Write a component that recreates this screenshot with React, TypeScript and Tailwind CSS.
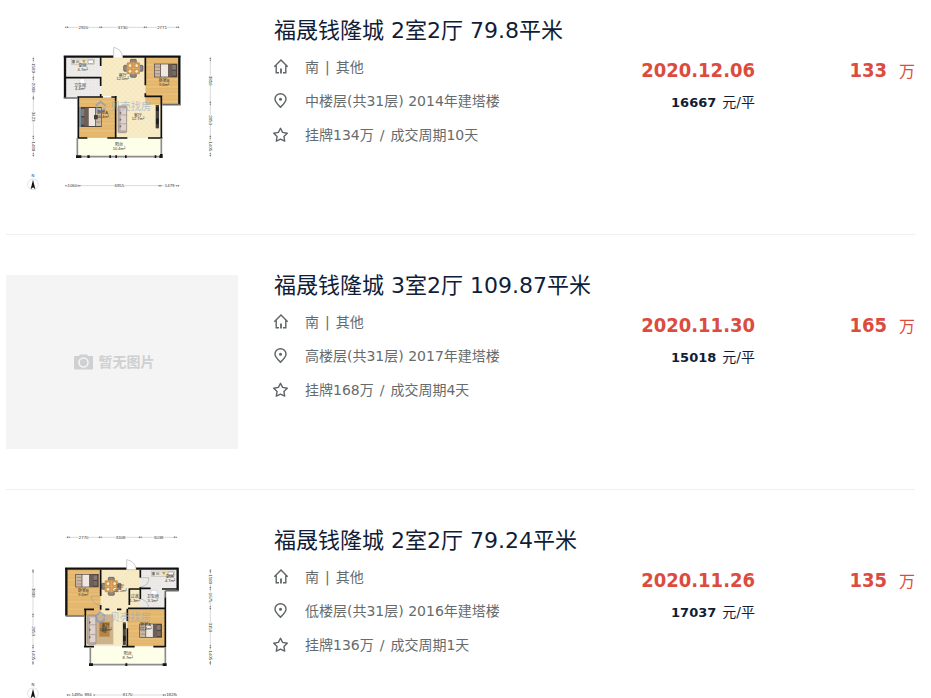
import { Fragment, type ReactNode } from 'react';

const SANS = "font-['DejaVu_Sans','Noto_Sans_CJK_SC',sans-serif]";
const PLAN_FONT = "font-['Liberation_Sans','Noto_Sans_CJK_SC',sans-serif]";
const BOLD = "font-['DejaVu_Sans_Condensed','DejaVu_Sans','Noto_Sans_CJK_SC',sans-serif] font-bold";

type PlanKind = 'east' | 'west' | 'none';

interface Deal {
  plan: PlanKind;
  title: string;
  facing: string;
  floor: string;
  cycle: string;
  date: string;
  unit: string;
  total: string;
}

const deals: Deal[] = [
  {
    plan: 'east',
    title: '福晟钱隆城 2室2厅 79.8平米',
    facing: '南 | 其他',
    floor: '中楼层(共31层) 2014年建塔楼',
    cycle: '挂牌134万 / 成交周期10天',
    date: '2020.12.06',
    unit: '16667',
    total: '133',
  },
  {
    plan: 'none',
    title: '福晟钱隆城 3室2厅 109.87平米',
    facing: '南 | 其他',
    floor: '高楼层(共31层) 2017年建塔楼',
    cycle: '挂牌168万 / 成交周期4天',
    date: '2020.11.30',
    unit: '15018',
    total: '165',
  },
  {
    plan: 'west',
    title: '福晟钱隆城 2室2厅 79.24平米',
    facing: '南 | 其他',
    floor: '低楼层(共31层) 2016年建塔楼',
    cycle: '挂牌136万 / 成交周期1天',
    date: '2020.11.26',
    unit: '17037',
    total: '135',
  },
];

function Icon({ children }: { children: ReactNode }) {
  return (
    <svg viewBox="0 0 14 16" className="h-4 w-3.5 shrink-0 overflow-visible" fill="none" stroke="#5f6566" strokeWidth="1.4" aria-hidden="true">
      {children}
    </svg>
  );
}

const HouseIcon = () => (
  <Icon>
    <path d="M0.3 7.700 7 1l6.700 6.700M2.200 6.500v7.200H5M11.800 6.500v7.200H9" />
    <path d="M7 9.500v5" strokeWidth="1.800" />
  </Icon>
);

const PinIcon = () => (
  <Icon>
    <path d="M6.500 14.200C3.400 11.200 1 8.900 1 6.200a5.500 5.500 0 0 1 11 0c0 2.700-2.400 5-5.500 8z" />
    <circle cx="6.500" cy="6.200" r="1.500" fill="#5f6566" stroke="none" />
  </Icon>
);

const StarIcon = () => (
  <Icon>
    <path d="M6.500 1.300 8.600 5.400l4.700.8-3.400 3.200.8 4.700-4.200-2-4.200 2 .8-4.700L-.3 6.200l4.700-.8z" strokeLinejoin="round" />
  </Icon>
);

/* ---- floor plan parts ---- */

function Dimension({ from, to, at, marks, labels, vertical }: {
  from: number;
  to: number;
  at: number;
  marks: number[];
  labels: [number, string][];
  vertical?: boolean;
}) {
  return (
    <g transform={vertical ? `translate(${at} 0) rotate(90)` : `translate(0 ${at})`}>
      <path d={`M${from} 0H${to}`} stroke="#b5b5b5" strokeWidth="1.500" />
      {[from, ...marks, to].map((m) => (
        <path key={m} d={`M${m - 6} 0l5-3v6zM${m + 6} 0l-5-3v6z`} fill="#777" />
      ))}
      {labels.map(([x, t]) => (
        <g key={x}>
          <rect x={x - 15} y={-6} width={30} height={12} fill="#fff" />
          <text x={x} y={4} fontSize="13" textAnchor="middle" fill="#333">
            {t}
          </text>
        </g>
      ))}
    </g>
  );
}

function Bed({ x, y, w, h, flip }: { x: number; y: number; w: number; h: number; flip?: boolean }) {
  return (
    <g transform={flip ? `translate(${x + w} ${y}) scale(-1 1)` : `translate(${x} ${y})`}>
      <rect width={w} height={h} fill="#51453e" />
      <rect x={w * 0.03} y={h * 0.05} width={w * 0.24} height={h * 0.9} fill="#cbb9a5" />
      <path d={`M4 ${h * 0.25}H${w * 0.28}M4 ${h * 0.5}H${w * 0.28}M4 ${h * 0.75}H${w * 0.28}`} stroke="#8b7563" strokeWidth="2" />
      <rect x={w * 0.3} y={h * 0.05} width={w * 0.3} height={h * 0.9} fill="#eee7e2" />
      <rect x={w * 0.6} y={h * 0.05} width={w * 0.18} height={h * 0.9} fill="#6d5f58" />
      <rect x={w * 0.78} y={h * 0.1} width={w * 0.16} height={h * 0.35} rx="2" fill="#877a76" />
      <rect x={w * 0.78} y={h * 0.52} width={w * 0.16} height={h * 0.36} rx="2" fill="#766a66" />
    </g>
  );
}

function DiningSet({ x, y }: { x: number; y: number }) {
  return (
    <g transform={`translate(${x} ${y})`}>
      <g fill="#8e8782" stroke="#57504b" strokeWidth="2">
        <rect x="-9" y="-27" width="18" height="11" rx="3" />
        <rect x="-9" y="16" width="18" height="11" rx="3" />
        <rect x="-29" y="-9" width="11" height="18" rx="3" />
        <rect x="18" y="-9" width="11" height="18" rx="3" />
      </g>
      <rect x="-20" y="-18" width="40" height="36" rx="4" fill="#cf984f" />
      <path d="M-20 0h40M0-18v36" stroke="#e4b06a" strokeWidth="2" />
      <g fill="#f3ead6">
        <circle cx="-10" cy="-8" r="4" />
        <circle cx="10" cy="-8" r="4" />
        <circle cx="-10" cy="9" r="4" />
        <circle cx="10" cy="9" r="4" />
      </g>
    </g>
  );
}

function Sofa({ x, y, h }: { x: number; y: number; h: number }) {
  return (
    <g transform={`translate(${x} ${y})`}>
      <rect width="26" height={h} rx="4" fill="#b9aaa5" stroke="#85756f" strokeWidth="1.500" />
      <rect x="8" y="7" width="16" height={h - 14} fill="#ddd2cd" />
      <path d={`M8 ${h / 3}h17M8 ${(h * 2) / 3}h17`} stroke="#8f7f79" strokeWidth="1.500" />
      <path d={`M5 ${h * 0.2}l6 5-6 5zM5 ${h * 0.45}l6 5-6 5zM5 ${h * 0.7}l6 5-6 5z`} fill="#7d6e6a" />
    </g>
  );
}

function Counter({ x, y }: { x: number; y: number }) {
  return (
    <g transform={`translate(${x} ${y})`}>
      <rect width="70" height="17" fill="#e9e5da" stroke="#9b968c" strokeWidth="1" />
      <rect x="3" y="3" width="7" height="10" fill="#77736e" />
      <rect x="14" y="4" width="10" height="8" fill="#b5b0a6" />
      <path d="M32 3h11l-5 10z" fill="#c7a33c" />
      <rect x="50" y="3" width="16" height="10" fill="#fff" stroke="#77736e" strokeWidth="1.500" />
    </g>
  );
}

function Watermark({ x, y }: { x: number; y: number }) {
  return (
    <g transform={`translate(${x} ${y})`} opacity="0.6">
      <path d="M-15-3 0-15 15-3M-11 0v9L0 15l11-6V3" fill="none" stroke="#7096d2" strokeWidth="6" />
      <text x="28" y="11" fontSize="31" fill="#8fa9cf">
        贝壳找房
      </text>
    </g>
  );
}

function Room({ x, y, name, area }: { x: number; y: number; name: string; area: string }) {
  return (
    <g fontSize="12" textAnchor="middle" fill="#33302b">
      <text x={x} y={y}>
        {name}
      </text>
      <text x={x} y={y + 11}>
        {area}
      </text>
    </g>
  );
}

function North({ y }: { y: number }) {
  return (
    <g transform={`translate(39 ${y})`}>
      <circle r="16" fill="#fff" stroke="#aaa" strokeWidth="1" />
      <path d="M0-14 7 15 0 9-7 15z" fill="#111" />
      <text y="-22" fontSize="12" textAnchor="middle" fill="#222">
        N
      </text>
    </g>
  );
}

function Patterns({ id }: { id: string }) {
  return (
    <defs>
      <pattern id={`${id}-wood`} width="44" height="22" patternUnits="userSpaceOnUse">
        <rect width="44" height="22" fill="#e6b970" />
        <path d="M0 5h44M0 16h44" stroke="#dfae62" strokeWidth="1.500" />
        <path d="M0 11h44" stroke="#ebc482" strokeWidth="3" />
      </pattern>
      <pattern id={`${id}-tile`} width="16" height="16" patternUnits="userSpaceOnUse">
        <rect width="16" height="16" fill="#f6e8c0" />
        <path d="M0 0h8v8H0zM8 8h8v8H8z" fill="#f8ecc8" />
      </pattern>
      <pattern id={`${id}-wet`} width="10" height="10" patternUnits="userSpaceOnUse">
        <rect width="10" height="10" fill="#ecebe9" />
        <path d="M0 0H10M0 0V10" stroke="#e2e0de" strokeWidth="1.500" />
      </pattern>
    </defs>
  );
}

const planClass = `h-[174px] w-[232px] shrink-0 ${PLAN_FONT}`;

function PlanEast() {
  return (
    <svg viewBox="-42 30 696 522" className={planClass} role="img" aria-label="户型图">
      <Patterns id="e" />
      <Dimension from={140} to={473} at={52} marks={[242, 376]} labels={[[190, '2920'], [308, '3730'], [426, '2771']]} />
      <Dimension from={140} to={473} at={527} marks={[177, 420]} labels={[[157, '1060'], [298, '6955'], [449, '1479']]} />
      <Dimension vertical from={148} to={434} at={40} marks={[205, 264, 382]} labels={[[174, '1589'], [233, '2009'], [320, '3423'], [409, '1489']]} />
      <Dimension vertical from={148} to={434} at={571} marks={[280, 382]} labels={[[212, '3850'], [330, '2850'], [409, '1405']]} />
      <path d="M242 142H376V258H424V384H288V258H242z" fill="url(#e-tile)" />
      <rect x="135" y="142" width="107" height="120" fill="url(#e-wet)" />
      <rect x="376" y="142" width="102" height="142" fill="url(#e-wood)" />
      <rect x="175" y="262" width="112" height="122" fill="url(#e-wood)" />
      <rect x="173" y="384" width="250" height="56" fill="#fdffe8" />
      <Counter x={154} y={147} />
      <path d="M180 206h14v14h-14z" fill="#fff" stroke="#bbb" />
      <DiningSet x={340} y={175} />
      <Bed x={402} y={161} w={70} h={41} />
      <Bed x={179} y={291} w={66} h={60} flip />
      <path d="M180 291v60" stroke="#7fa3b4" strokeWidth="5" />
      <rect x="222" y="315" width="11" height="13" fill="#3c4139" />
      <Sofa x={294} y={288} h={80} />
      <path d="M412 285v70" stroke="#46423e" strokeWidth="10" />
      <path d="M408 291h8v12h-8zM408 325h8v18h-8z" fill="#201f1f" />
      <g fill="none" stroke="#111" strokeWidth="5">
        <path d="M280 140H131M135 137V264M308 140H482M478 137V284" strokeWidth="7" />
        <path d="M135 203H242M242 142V168M242 200V228M242 252V261M376 142V226M376 250V259H424V384" />
        <path d="M172 261H249M274 261H290M175 261V384M287 258V384M172 384H202M262 384H322M384 384H427" />
      </g>
      <path d="M131 264H172M427 284H482" stroke="#696969" strokeWidth="5" />
      <path d="M172 384V440H424V384" fill="none" stroke="#8c8c8c" strokeWidth="5" />
      <path d="M168 440h16M202 440h7M268 440h5M286 440h5M315 440h5M404 440h5M418 440h9M424 432v12" stroke="#151515" strokeWidth="8" />
      <path d="M281 141V112Q306 117 307 141" fill="#fff" stroke="#999" strokeWidth="1.500" />
      <Watermark x={242} y={290} />
      <Room x={188} y={172} name="厨房" area="4.7m²" />
      <Room x={180} y={230} name="卫生间" area="4.4m²" />
      <Room x={308} y={200} name="餐厅" area="12.0m²" />
      <Room x={432} y={217} name="卧室B" area="9.6m²" />
      <Room x={248} y={312} name="卧室A" area="10.4m²" />
      <Room x={354} y={320} name="客厅" area="12.7m²" />
      <Room x={297} y={409} name="阳台" area="10.4m²" />
      <North y={523} />
    </svg>
  );
}

function PlanWest() {
  return (
    <svg viewBox="-42 15 696 522" className={planClass} role="img" aria-label="户型图">
      <Patterns id="w" />
      <Dimension from={145} to={466} at={37} marks={[241, 361]} labels={[[191, '2770'], [302, '3308'], [416, '3038']]} />
      <Dimension from={145} to={466} at={510} marks={[187, 220, 433]} labels={[[169, '1495'], [204, '894'], [323, '8170'], [453, '1828']]} />
      <Dimension vertical from={138} to={414} at={39} marks={[271, 365]} labels={[[203, '3890'], [318, '2850'], [391, '1405']]} />
      <Dimension vertical from={138} to={414} at={571} marks={[190, 248, 365]} labels={[[163, '1580'], [218, '1675'], [307, '3150'], [391, '1405']]} />
      <path d="M242 134H361V252H322V364H197V250H242z" fill="url(#w-tile)" />
      <rect x="328" y="192" width="34" height="59" fill="url(#w-tile)" />
      <path d="M361 134H473V194H436V251H361z" fill="url(#w-wet)" />
      <rect x="141" y="134" width="101" height="138" fill="url(#w-wood)" />
      <rect x="322" y="252" width="114" height="112" fill="url(#w-wood)" />
      <rect x="211" y="366" width="224" height="52" fill="#fdffe8" />
      <Bed x={166} y={147} w={70} h={40} />
      <DiningSet x={274} y={184} />
      <Counter x={394} y={138} />
      <path d="M393 196h18v15h-18z" fill="#fff" stroke="#aaa" />
      <rect x="214" y="268" width="66" height="90" fill="#cdb28e" />
      <Sofa x={202} y={270} h={88} />
      <rect x="238" y="291" width="31" height="44" fill="#b98440" />
      <path d="M246 302l15 5-3 18-13-5z" fill="#6b6745" />
      <Bed x={358} y={296} w={68} h={42} />
      <path d="M313 292v68" stroke="#46423e" strokeWidth="9" />
      <path d="M309 298h8v14h-8zM309 332h8v16h-8z" fill="#201f1f" />
      <g fill="none" stroke="#111" strokeWidth="5">
        <path d="M320 131H135M139 128V272M348 131H475M473 128V198" strokeWidth="7" />
        <path d="M242 134V213M242 240V254M361 134V158M361 186V222M361 190H392M426 192H473M326 192H361M328 192V240M324 250H437" />
        <path d="M192 253H222M256 253H268M196 253V367M291 253H304M322 251V288M322 310V365M192 365H222M306 365H344M400 365H438M436 217V367" />
      </g>
      <path d="M137 273H193M436 198V217M476 197H436" stroke="#6b6b6b" strokeWidth="5" fill="none" />
      <path d="M211 367V419H436V367" fill="none" stroke="#8c8c8c" strokeWidth="5" />
      <path d="M207 419h12M316 419h6M428 419h12" stroke="#151515" strokeWidth="8" />
      <g fill="#fff" stroke="#999" strokeWidth="1.500">
        <path d="M320 134V104Q347 109 348 134z" />
        <path d="M361 158h26q0 25-26 28M242 213h-28q2 25 28 28M361 222q22 3 26 28" fill="none" />
      </g>
      <Watermark x={241} y={277} />
      <Room x={190} y={202} name="卧室B" area="9.6m²" />
      <Room x={301} y={189} name="客厅" area="20.1m²" />
      <Room x={450} y={160} name="厨房" area="4.7m²" />
      <Room x={344} y={219} name="过道" area="1.3m²" />
      <Room x={398} y={219} name="卫生间" area="3.1m²" />
      <Room x={257} y={306} name="客厅" area="14.6m²" />
      <Room x={377} y={304} name="卧室A" area="10.4m²" />
      <Room x={323} y={390} name="阳台" area="8.7m²" />
      <North y={505} />
    </svg>
  );
}

function NoPicture() {
  return (
    <div className="flex h-[174px] w-[232px] shrink-0 items-center justify-center gap-1.5 bg-[#f4f4f4] pr-4 text-sm font-bold text-[#cfd0d1]">
      <svg viewBox="0 0 19 16" className="h-4 w-[19px]" aria-hidden="true">
        <path d="M1 2h4l1-1.500h7L14 2h4q1 0 1 1v11.500q0 1-1 1H1q-1 0-1-1V3q0-1 1-1z" fill="#cfd0d1" />
        <circle cx="9.500" cy="8.500" r="4.500" fill="none" stroke="#f4f4f4" strokeWidth="1.600" />
      </svg>
      <span>暂无图片</span>
    </div>
  );
}

function Detail({ icon, text }: { icon: ReactNode; text: string }) {
  return (
    <li className="flex h-[34px] items-center gap-[17px]">
      {icon}
      <span className="whitespace-nowrap">
        {text.split(/ ([|/]) /).map((part, i) =>
          i % 2 ? (
            <span key={i} className="mx-1.5">
              {part}
            </span>
          ) : (
            <Fragment key={i}>{part}</Fragment>
          ),
        )}
      </span>
    </li>
  );
}

function DealRow({ deal }: { deal: Deal }) {
  return (
    <li className="flex gap-9 border-b border-[#f0f0f0] py-10 first:pt-5">
      {deal.plan === 'east' && <PlanEast />}
      {deal.plan === 'west' && <PlanWest />}
      {deal.plan === 'none' && <NoPicture />}
      <div className="flex min-w-0 flex-1">
        <div className="min-w-0 flex-1">
          <h2 className="h-[22px] whitespace-nowrap text-[22px] leading-[22px] text-[#101d37]">
            <a href="#">{deal.title}</a>
          </h2>
          <ul className="mt-2 text-sm text-[#666b6d]">
            <Detail icon={<HouseIcon />} text={deal.facing} />
            <Detail icon={<PinIcon />} text={deal.floor} />
            <Detail icon={<StarIcon />} text={deal.cycle} />
          </ul>
        </div>
        <div className="pt-10 text-right">
          <div className={`text-xl leading-5 text-[#db4c3f] ${BOLD}`}>{deal.date}</div>
          <div className="mt-3 flex items-baseline justify-end gap-1.5 text-sm leading-5 text-[#101d37]">
            <span className="text-[13px] leading-5 font-bold">{deal.unit}</span>
            <span>元/平</span>
          </div>
        </div>
        <div className="flex w-40 items-baseline justify-end gap-3 self-start pt-10 leading-5 text-[#db4c3f]">
          <span className={`text-xl leading-5 ${BOLD}`}>{deal.total}</span>
          <span className="text-base leading-5">万</span>
        </div>
      </div>
    </li>
  );
}

export default function App() {
  return (
    <main className={`bg-white pr-4 pl-1.5 ${SANS}`}>
      <ul>
        {deals.map((deal) => (
          <DealRow key={deal.date} deal={deal} />
        ))}
      </ul>
    </main>
  );
}
